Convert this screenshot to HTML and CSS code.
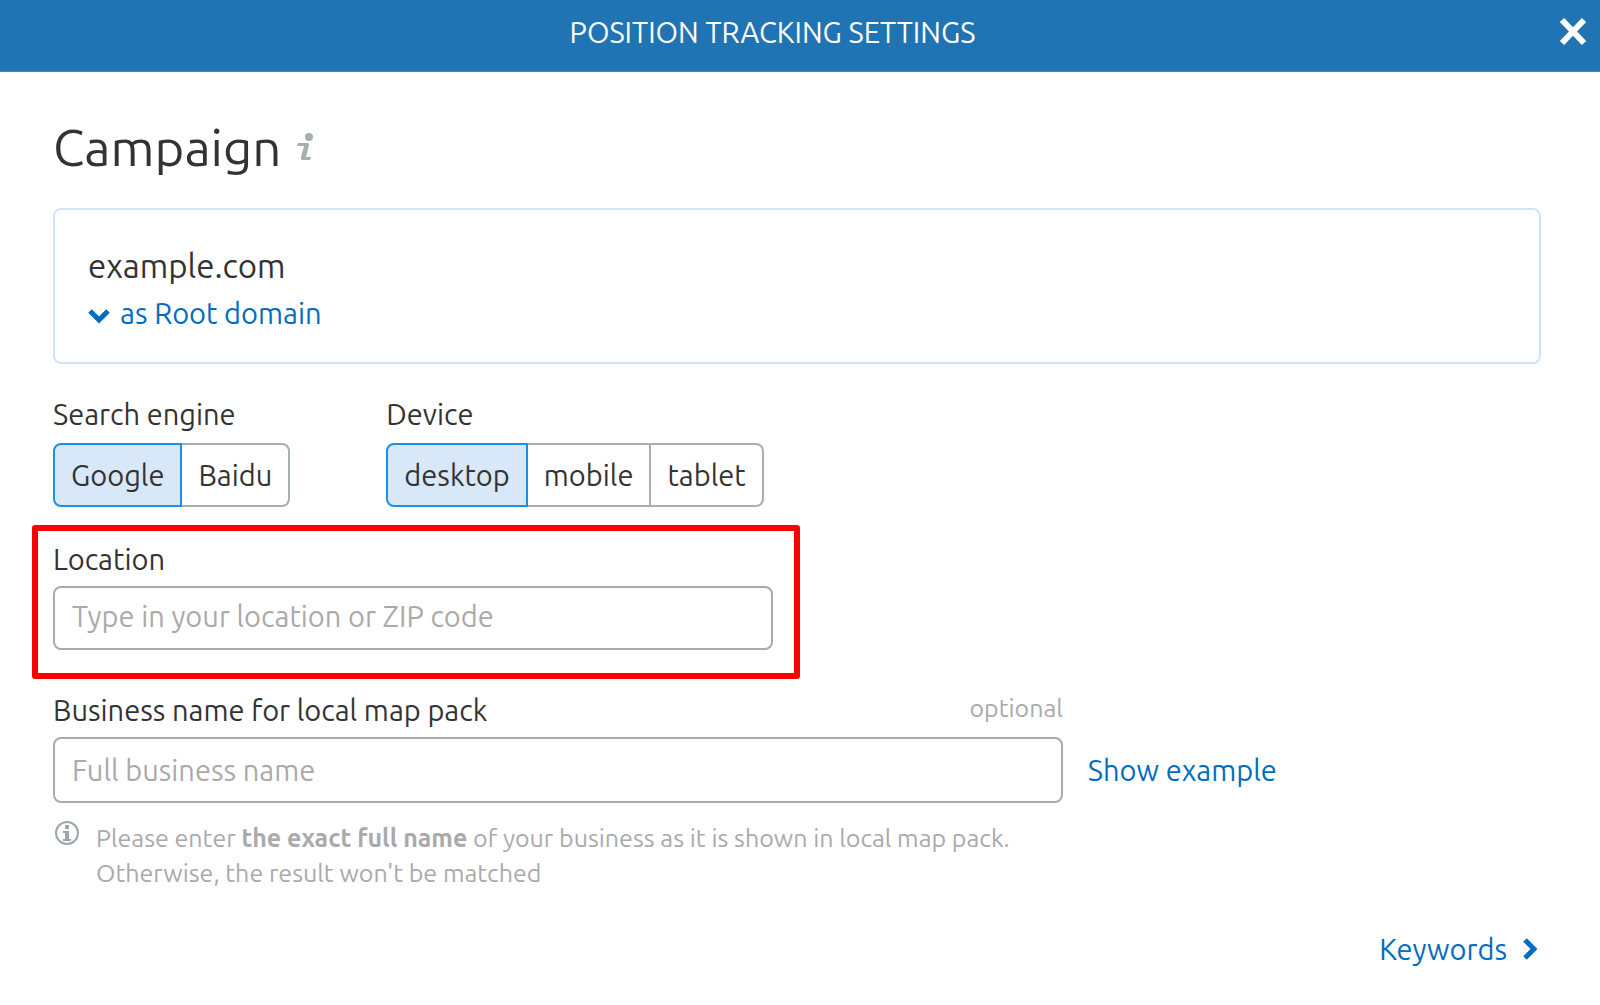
FILE: index.html
```html
<!DOCTYPE html>
<html lang="en">
<head>
    <meta charset="UTF-8">
    <meta name="viewport" content="width=device-width, initial-scale=1.0">
    <title>Position Tracking Settings</title>
    <link rel="stylesheet" href="styles.css">
</head>
<body>

    <header class="header">
        <div class="header-title">POSITION TRACKING SETTINGS</div>
        <button class="close" type="button" aria-label="Close">
            <svg width="28" height="30" viewBox="0 0 28 30">
                <path d="M3 3L25 26M25 3L3 26" stroke="currentColor" stroke-width="6"/>
            </svg>
        </button>
    </header>

    <main class="content">
        <div class="title-row">
            <h1>Campaign</h1>
            <svg class="title-info" width="16" height="28" viewBox="0 0 16 28">
                <circle cx="12" cy="4" r="4"/>
                <path d="M1 10H11Q12 10 12 12L9 24H14L13 27H6Q3 27 4 24L7 13H0Z"/>
            </svg>
        </div>

        <section class="domain-box">
            <div class="domain">example.com</div>
            <button class="domain-type" type="button">
                <svg width="22" height="16" viewBox="0 0 22 16">
                    <path d="M2 3L11 12L20 3" fill="none" stroke="currentColor" stroke-width="5"/>
                </svg>
                as Root domain
            </button>
        </section>

        <form>
            <div class="options">
                <div class="engine" role="group" aria-labelledby="engineLabel">
                    <div class="label" id="engineLabel">Search engine</div>
                    <div class="switch">
                        <button class="active" type="button" aria-pressed="true">Google</button>
                        <button type="button" aria-pressed="false">Baidu</button>
                    </div>
                </div>
                <div role="group" aria-labelledby="deviceLabel">
                    <div class="label" id="deviceLabel">Device</div>
                    <div class="switch">
                        <button class="active" type="button" aria-pressed="true">desktop</button>
                        <button type="button" aria-pressed="false">mobile</button>
                        <button type="button" aria-pressed="false">tablet</button>
                    </div>
                </div>
            </div>

            <div class="highlight">
                <label class="label" for="location">Location</label>
                <input type="text" id="location" name="location" placeholder="Type in your location or ZIP code">
            </div>

            <div class="business">
                <div class="label-row">
                    <label class="label" for="business">Business name for local map pack</label>
                    <span class="optional">optional</span>
                </div>
                <input type="text" id="business" name="business" placeholder="Full business name">
                <a class="example-link" href="#">Show example</a>
            </div>

            <div class="hint">
                <svg width="24" height="24" viewBox="0 0 24 24">
                    <circle cx="12" cy="12" r="11" fill="none" stroke="currentColor" stroke-width="2"/>
                    <path d="M10 4h4v4h-4zM8 10h6v8h2v2H8v-2h2v-6H8z" fill="currentColor"/>
                </svg>
                <p>Please enter <b>the exact full name</b> of your business as it is shown in local map pack.<br>Otherwise, the result won't be matched</p>
            </div>
        </form>

        <div class="footer">
            <a href="#">Keywords
                <svg width="14" height="24" viewBox="0 0 14 24">
                    <path d="M2 3L11 12L2 21" fill="none" stroke="currentColor" stroke-width="5"/>
                </svg>
            </a>
        </div>
    </main>

</body>
</html>
```
FILE: styles.css
```css
* {
    box-sizing: border-box;
}
body {
    margin: 0;
    background: #ffffff;
    color: #333333;
    font-family: Ubuntu, "Noto Sans", sans-serif;
    font-size: 29px;
    line-height: 36px;
}
button, input {
    font: inherit;
    color: inherit;
}
button {
    border: none;
    background: none;
    padding: 0;
    cursor: pointer;
}
a {
    color: #006dbf;
    text-decoration: none;
}
svg {
    display: block;
    flex: none;
}

.header {
    display: flex;
    align-items: center;
    height: 72px;
    padding: 0 13px 8px 0;
    background: #2174b3;
    border-bottom: 1px solid #3c8ac4;
    color: #ffffff;
}
.header-title {
    flex: 1;
    padding-right: 14px;
    text-align: center;
}

.content {
    padding: 43px 59px 0 53px;
}
.title-row {
    display: flex;
    align-items: center;
    gap: 16px;
}
h1 {
    margin: 0;
    font-size: 51px;
    font-weight: 400;
    line-height: 64px;
}
.title-info {
    fill: #a6b0b3;
}

.domain-box {
    margin-top: 29px;
    padding: 36px 33px 31px;
    border: 2px solid #d3e2f8;
    border-radius: 8px;
}
.domain {
    font-size: 33px;
    line-height: 40px;
}
.domain-type {
    display: flex;
    align-items: center;
    gap: 10px;
    margin-top: 9px;
    color: #006dbf;
}
.domain-type svg {
    margin-top: 5px;
}

.label {
    display: block;
}
.options {
    display: flex;
    gap: 96px;
    margin-top: 32px;
}
.switch {
    display: flex;
    margin-top: 11px;
}
.switch button {
    height: 64px;
    padding: 0 16px;
    border: 2px solid #a6b0b3;
    border-left-width: 0;
}
.switch button:first-child {
    border-left-width: 2px;
    border-radius: 8px 0 0 8px;
}
.switch button:last-child {
    border-radius: 0 8px 8px 0;
}
.switch .active {
    background: #d8e8f8;
    border-color: #1f8fe6;
}

input {
    display: block;
    width: 100%;
    height: 64px;
    padding: 0 17px;
    border: 2px solid #a3adb0;
    border-radius: 8px;
    background: #ffffff;
}
input::placeholder {
    color: #aaaaaa;
    opacity: 1;
    overflow: visible;
}
.highlight {
    width: calc(50% + 24px);
    margin: 18px 0 0 -21px;
    padding: 10px 21px 23px 15px;
    border: 6px solid #ff0000;
    border-radius: 3px;
}
.highlight input {
    margin-top: 9px;
    padding-bottom: 4px;
}

.business {
    display: grid;
    grid-template-columns: calc(68% - 2px) auto;
    align-items: center;
    column-gap: 25px;
    row-gap: 9px;
    margin-top: 13px;
}
.label-row {
    display: flex;
    justify-content: space-between;
    grid-column: 1;
}
.business input {
    grid-column: 1;
    height: 66px;
}
.optional {
    color: #aaaaaa;
    font-size: 25px;
    line-height: 32px;
}

.hint {
    display: flex;
    gap: 17px;
    margin-top: 18px;
    padding-left: 2px;
    color: #9aa8ab;
}
.hint p {
    margin: 0;
    color: #aaaaaa;
    font-size: 25px;
    line-height: 35px;
}

.footer {
    display: flex;
    justify-content: flex-end;
    margin-top: 40px;
    padding-right: 4px;
}
.footer a {
    display: flex;
    align-items: center;
    gap: 16px;
}
```
